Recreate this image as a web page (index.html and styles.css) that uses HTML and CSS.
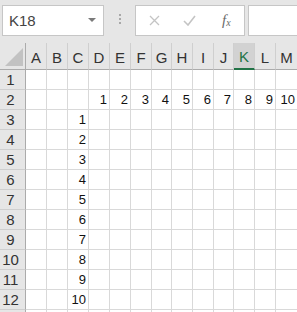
FILE: index.html
```html
<!DOCTYPE html>
<html lang="ja">
<head>
    <meta charset="UTF-8">
    <meta name="viewport" content="width=device-width, initial-scale=1.0">
    <title>Sheet1</title>
    <link rel="stylesheet" href="styles.css">
</head>
<body>
    <!-- Formula bar -->
    <div class="toolbar">
        <div class="name-box">
            <span>K18</span>
            <svg class="drop" width="8" height="5" viewBox="0 0 8 5"><polygon points="0,0 8,0 4,4" fill="#7a7a7a"/></svg>
        </div>
        <div class="grip"><i></i><i></i><i></i></div>
        <div class="fx-box">
            <svg class="btn" width="11" height="11" viewBox="0 0 11 11"><path d="M1 1 L10 10 M10 1 L1 10" stroke="#c4c4c4" stroke-width="1.3" fill="none"/></svg>
            <svg class="btn" width="13" height="11" viewBox="0 0 13 11"><path d="M1 6 L5 10 L12 1" stroke="#c4c4c4" stroke-width="1.6" fill="none"/></svg>
            <span class="fx">f<sub>x</sub></span>
        </div>
        <div class="formula"></div>
    </div>

    <!-- Grid -->
    <div class="sheet" id="sheet"></div>

    <script>
        // Build the header row, row headers and cells
        function buildSheet() {
            const sheet = document.getElementById('sheet');
            const letters = ['A','B','C','D','E','F','G','H','I','J','K','L','M'];
            const rows = 13;

            let corner = document.createElement('div');
            corner.className = 'corner';
            corner.innerHTML = '<svg width="25" height="27" viewBox="0 0 25 27"><polygon points="5,23 23,23 23,5" fill="#c2c2c2"/></svg>';
            sheet.appendChild(corner);

            letters.forEach(function (l) {
                const h = document.createElement('div');
                h.className = 'col-head' + (l === 'K' ? ' active' : '');
                h.textContent = l;
                sheet.appendChild(h);
            });

            for (let r = 1; r <= rows; r++) {
                // last row only peeks in at the bottom edge, its text is out of view
                const visible = r < rows;

                const rh = document.createElement('div');
                rh.className = 'row-head';
                if (visible) rh.textContent = r;
                sheet.appendChild(rh);

                letters.forEach(function (l, c) {
                    const cell = document.createElement('div');
                    cell.className = 'cell';
                    // row 2 holds 1..10 from column D, column C holds 1..10 from row 3
                    if (r === 2 && c >= 3) cell.textContent = c - 2;
                    if (l === 'C' && r >= 3 && visible) cell.textContent = r - 2;
                    sheet.appendChild(cell);
                });
            }
        }

        buildSheet();
    </script>
</body>
</html>
```

FILE: styles.css
```css
body {
    margin: 0;
    width: 297px;
    height: 312px;
    overflow: hidden;
    background: #fff;
    font-family: "Liberation Sans", Arial, sans-serif;
}

.toolbar {
    display: flex;
    align-items: flex-start;
    height: 43px;
    padding-top: 5px;
    box-sizing: border-box;
    background: #e6e6e6;
}

.name-box {
    display: flex;
    align-items: center;
    justify-content: space-between;
    width: 102px;
    height: 31px;
    margin-left: 2px;
    padding: 0 7px 1px 6px;
    box-sizing: border-box;
    background: #fff;
    border: 1px solid #c6c6c6;
    font-size: 15px;
    color: #444;
}

.grip {
    display: flex;
    flex-direction: column;
    gap: 2px;
    margin: 9px 14px 0 15px;
}

.grip i {
    width: 2px;
    height: 2px;
    background: #a8a8a8;
}

.fx-box {
    display: flex;
    align-items: center;
    width: 110px;
    height: 31px;
    padding-left: 13px;
    box-sizing: border-box;
    background: #fff;
    border: 1px solid #c6c6c6;
}

.btn {
    margin-right: 23px;
}

.btn + .btn {
    margin-right: 26px;
}

.fx {
    font-family: "Liberation Serif", serif;
    font-style: italic;
    font-size: 15px;
    color: #6a6a6a;
}

.fx sub {
    font-size: 10px;
    vertical-align: -1px;
}

.formula {
    flex: 1;
    height: 31px;
    margin-left: 3px;
    box-sizing: border-box;
    background: #fff;
    border: 1px solid #c6c6c6;
    border-right: none;
}

.sheet {
    display: grid;
    grid-template-columns: 26px repeat(6, 21px) 20px 21px 21px 20px 21px 21px 22px;
    grid-template-rows: 27px repeat(13, 20px);
}

.sheet > div {
    box-sizing: border-box;
}

.corner {
    background: #e6e6e6;
    border-right: 1px solid #ababab;
    border-bottom: 1px solid #ababab;
}

.corner svg {
    display: block;
}

.col-head {
    display: flex;
    align-items: center;
    justify-content: center;
    padding-top: 2px;
    background: #e6e6e6;
    border-right: 1px solid #cfcfcf;
    border-bottom: 1px solid #ababab;
    font-size: 15px;
    color: #333;
}

.col-head.active {
    background: #d2d2d2;
    color: #217346;
    border-bottom: 2px solid #217346;
}

.row-head {
    padding: 2px 4px 0 0;
    text-align: center;
    background: #e6e6e6;
    border-right: 1px solid #ababab;
    border-bottom: 1px solid #cfcfcf;
    font-size: 15px;
    line-height: 15px;
    color: #333;
}

.cell {
    display: flex;
    align-items: flex-end;
    justify-content: flex-end;
    padding: 0 2px 3px 0;
    border-right: 1px solid #d9d9d9;
    border-bottom: 1px solid #d9d9d9;
    font-size: 13px;
    line-height: 13px;
    color: #111;
}
```
